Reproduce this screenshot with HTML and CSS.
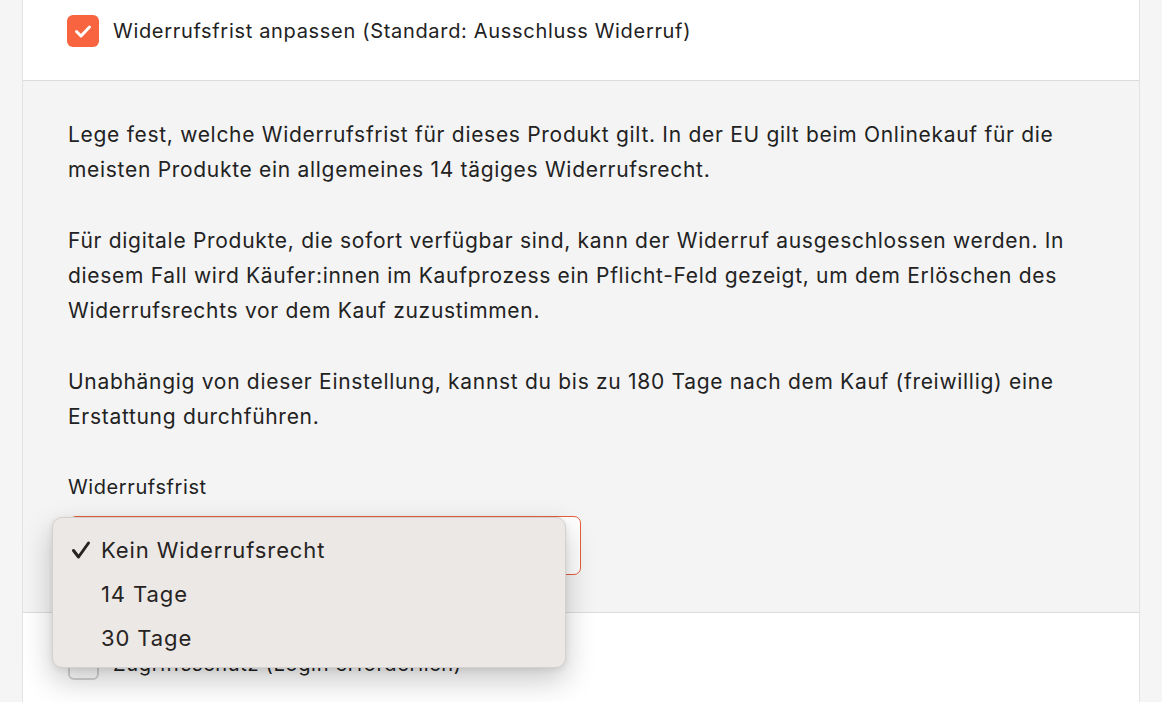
FILE: index.html
```html
<!DOCTYPE html>
<html lang="de">
<head>
<meta charset="utf-8">
<title>Widerrufsfrist</title>
<link rel="stylesheet" href="styles.css">
</head>
<body>
<div class="page">
  <div class="card">
    <div class="section section-top">
      <label class="check-row">
        <span class="checkbox checked">
          <svg viewBox="0 0 32 32" width="32" height="32"><path d="M9.5 16.5l4.5 4.5 8.5-9" fill="none" stroke="#fff" stroke-width="3" stroke-linecap="round" stroke-linejoin="round"/></svg>
        </span>
        <span class="check-label">Widerrufsfrist anpassen (Standard: Ausschluss Widerruf)</span>
      </label>
    </div>
    <div class="section section-gray">
      <p>Lege fest, welche Widerrufsfrist für dieses Produkt gilt. In der EU gilt beim Onlinekauf für die meisten Produkte ein allgemeines 14 tägiges Widerrufsrecht.</p>
      <p>Für digitale Produkte, die sofort verfügbar sind, kann der Widerruf ausgeschlossen werden. In diesem Fall wird Käufer:innen im Kaufprozess ein Pflicht-Feld gezeigt, um dem Erlöschen des Widerrufsrechts vor dem Kauf zuzustimmen.</p>
      <p>Unabhängig von dieser Einstellung, kannst du bis zu 180 Tage nach dem Kauf (freiwillig) eine Erstattung durchführen.</p>
      <div class="field">
        <div class="field-label">Widerrufsfrist</div>
        <div class="select-wrap">
          <div class="select">
            <svg class="chevron" viewBox="0 0 12 20" width="12" height="20"><path d="M2 7l4-4 4 4M2 13l4 4 4-4" fill="none" stroke="#666" stroke-width="1.6" stroke-linecap="round" stroke-linejoin="round"/></svg>
          </div>
          <div class="menu">
            <div class="menu-item"><span class="tick"><svg viewBox="0 0 22 22" width="22" height="22"><path d="M3.5 11.5l5 6.5 10-14" fill="none" stroke="#262322" stroke-width="3" stroke-linecap="round" stroke-linejoin="round"/></svg></span>Kein Widerrufsrecht</div>
            <div class="menu-item"><span class="tick"></span>14 Tage</div>
            <div class="menu-item"><span class="tick"></span>30 Tage</div>
          </div>
        </div>
      </div>
    </div>
    <div class="section section-bottom">
      <label class="check-row">
        <span class="checkbox"></span>
        <span class="check-label">Zugriffsschutz (Login erforderlich)</span>
      </label>
    </div>
  </div>
</div>
</body>
</html>
```

FILE: styles.css
```css
html, body {
  margin: 0;
  padding: 0;
  background: #f5f5f5;
  height: 100%;
  overflow: hidden;
}
body {
  font-family: "Inter", "Noto Sans", sans-serif;
  color: #222222;
}
.page {
  padding: 0 22px;
}
.card {
  background: #ffffff;
  border-left: 1px solid #e3e3e3;
  border-right: 1px solid #e3e3e3;
  min-height: 702px;
}
.section {
  padding-left: 44px;
  padding-right: 44px;
}
.section-top {
  padding-top: 15px;
  box-sizing: border-box;
  border-bottom: 1px solid #dcdcdc;
  height: 81px;
}
.check-row {
  display: flex;
  align-items: center;
  gap: 14px;
}
.checkbox {
  width: 32px;
  height: 32px;
  box-sizing: border-box;
  border-radius: 6px;
  border: 2px solid #d4d4d4;
  background: #ffffff;
  flex: none;
  display: flex;
}
.checkbox.checked {
  background: #f7643f;
  border: none;
}
.check-label {
  font-size: 20px;
  letter-spacing: 0.68px;
}
.section-gray {
  background: #f4f4f4;
  border-bottom: 1px solid #dcdcdc;
  padding-top: 36px;
  padding-bottom: 37px;
  padding-left: 45px;
  padding-right: 38px;
}
.section-gray p {
  margin: 0 0 36px;
  font-size: 21px;
  line-height: 35px;
  letter-spacing: 0.7px;
}
.section-gray p:last-of-type {
  margin-bottom: 0;
}
.field-label {
  font-size: 20px;
  line-height: 28px;
  letter-spacing: 0.6px;
  margin-top: 39px;
}
.select-wrap {
  position: relative;
  margin-top: 15px;
}
.select {
  width: 512px;
  height: 59px;
  box-sizing: border-box;
  border: 1px solid #e5603d;
  border-radius: 7px;
  background: #ffffff;
  margin-left: 1px;
  padding: 0 16px;
  display: flex;
  align-items: center;
  justify-content: flex-end;
}
.menu {
  position: absolute;
  left: -16px;
  top: 1px;
  width: 514px;
  height: 151px;
  box-sizing: border-box;
  background: #ebe8e5;
  border: 1px solid #d3d0cd;
  border-radius: 10px;
  box-shadow: 0 12px 30px rgba(0, 0, 0, 0.22), 0 2px 6px rgba(0, 0, 0, 0.08);
  padding-top: 10px;
}
.menu-item {
  display: flex;
  align-items: center;
  height: 44px;
  font-size: 22px;
  letter-spacing: 0.9px;
  color: #262322;
  padding-left: 17px;
}
.tick {
  width: 31px;
  height: 22px;
  display: flex;
  align-items: center;
}
.section-bottom {
  padding-top: 34px;
  padding-left: 45px;
}
.section-bottom .checkbox {
  width: 31px;
  height: 33px;
}
```
